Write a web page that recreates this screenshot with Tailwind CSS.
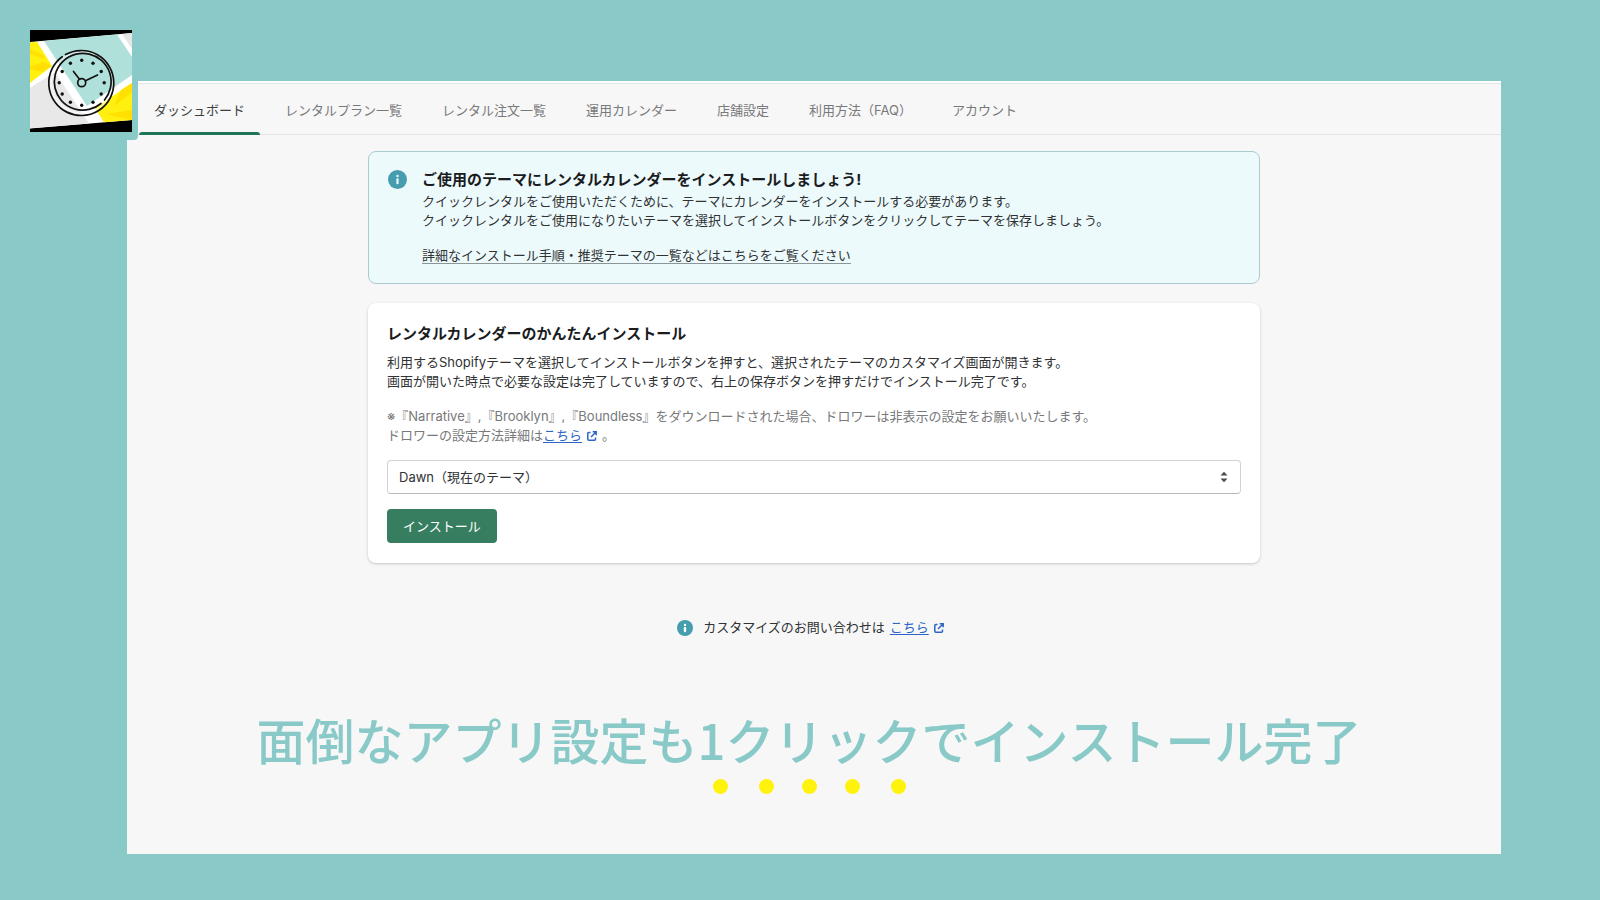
<!DOCTYPE html>
<html lang="ja">
<head>
<meta charset="utf-8">
<meta name="viewport" content="width=device-width, initial-scale=1">
<title>クイックレンタル</title>
<script src="https://cdn.jsdelivr.net/npm/@tailwindcss/browser@4"></script>
</head>
<body class="relative min-h-screen bg-[#89cac8] pt-[81px] pr-[99px] pb-[46px] pl-[127px] font-['Inter','Noto_Sans_CJK_JP',sans-serif] text-[13px] leading-[19px] text-[#303234]">

<!-- App logo badge over the panel corner -->
<div class="absolute top-0 left-0 z-10 rounded-br bg-[#89cac8] pt-[30px] pr-[6px] pb-[8px] pl-[30px]">
  <svg class="block size-[102px]" viewBox="0 0 102 102" role="img" aria-label="クイックレンタル">
    <rect width="102" height="102" fill="#000"/>
    <path d="M0 12 102 3V90L0 98.500Z" fill="#fff"/>
    <path d="M0 12.300 7 11.700 22 36 0 53Z" fill="#fff00f"/>
    <path d="M0 19 15 26 13 29 0 24ZM0 36 14 32 22 36 12 42 0 39Z" fill="#ffe000"/>
    <path d="M14 11 87 4.600 102 27V45L57 76Z" fill="#afe0da"/>
    <path d="M92 4 102 3V19Z" fill="#e6e6e6"/>
    <path d="M0 58 25 42 59 93.500 0 98.300Z" fill="#e8e8e8"/>
    <path d="M102 53V90L74 92.200 65 78Z" fill="#fff00f"/>
    <path d="M102 53V62L84 76 91 60ZM102 80 76 84 102 90Z" fill="#ffe000"/>
    <circle cx="51.700" cy="52.700" r="30.500" fill="none" stroke="#fff" stroke-opacity=".5" stroke-width="2.500"/>
    <g fill="none" stroke="#111" stroke-width="1.700" stroke-linecap="round">
      <path d="M35.500 24.600A32.500 32.500 0 1 1 32.200 26.700"/>
      <path d="M74.500 70A28.400 28.400 0 1 0 71 73.500"/>
      <path d="M43.500 41.500 49.500 49.200M55.500 50.800 67.500 45"/>
      <circle cx="51.700" cy="52.700" r="4"/>
    </g>
    <g fill="#111">
      <circle cx="51.700" cy="30.200" r="1.700"/><circle cx="63" cy="33.200" r="1.700"/><circle cx="71.200" cy="41.500" r="1.700"/>
      <circle cx="74.200" cy="52.700" r="1.700"/><circle cx="71.200" cy="64" r="1.700"/><circle cx="63" cy="72.200" r="1.700"/>
      <circle cx="51.700" cy="75.200" r="1.700"/><circle cx="40.400" cy="72.200" r="1.700"/><circle cx="32.200" cy="64" r="1.700"/>
      <circle cx="29.200" cy="52.700" r="1.700"/><circle cx="32.200" cy="41.500" r="1.700"/><circle cx="40.400" cy="33.200" r="1.700"/>
    </g>
  </svg>
</div>

<div class="min-h-[calc(100vh-127px)] border-t-2 border-white bg-[#f7f7f7]">
  <nav class="flex border-y border-[#e3e4e5] pl-[7px] text-[#77797b]">
    <a href="#" aria-current="page" class="relative px-5 pt-[17px] pb-[14px] text-[#3c3e40]">ダッシュボード<span class="absolute -bottom-px left-[5px] right-[5px] h-[3px] rounded-t bg-[#1f7657]"></span></a>
    <a href="#" class="px-5 pt-[17px] pb-[14px]">レンタルプラン一覧</a>
    <a href="#" class="px-5 pt-[17px] pb-[14px]">レンタル注文一覧</a>
    <a href="#" class="px-5 pt-[17px] pb-[14px]">運用カレンダー</a>
    <a href="#" class="px-5 pt-[17px] pb-[14px]">店舗設定</a>
    <a href="#" class="px-5 pt-[17px] pb-[14px]">利用方法（FAQ）</a>
    <a href="#" class="px-5 pt-[17px] pb-[14px]">アカウント</a>
  </nav>

  <main class="mx-auto max-w-[892px] pt-4">
    <section class="flex gap-[15px] rounded-lg border border-[#a9cbd1] bg-[#edfafc] px-[19px] pt-4 pb-[18px]">
      <svg class="mt-[2px] size-[19px] shrink-0" viewBox="0 0 20 20" aria-hidden="true"><circle cx="10" cy="10" r="10" fill="#459dad"/><circle cx="10" cy="6.200" r="1.300" fill="#ebf9fc"/><rect x="8.800" y="8.700" width="2.400" height="6.300" rx="1" fill="#ebf9fc"/></svg>
      <div>
        <h2 class="text-[15px] leading-6 font-bold text-[#1a1c1e]">ご使用のテーマにレンタルカレンダーをインストールしましょう!</h2>
        <p>クイックレンタルをご使用いただくために、テーマにカレンダーをインストールする必要があります。<br>クイックレンタルをご使用になりたいテーマを選択してインストールボタンをクリックしてテーマを保存しましょう。</p>
        <p class="mt-4"><a href="#" class="border-b border-[#8c9698]">詳細なインストール手順・推奨テーマの一覧などはこちらをご覧ください</a></p>
      </div>
    </section>

    <section class="mt-[19px] rounded-lg bg-white px-[19px] pt-[19px] pb-5 shadow-[0_1px_3px_rgba(0,0,0,0.2)]">
      <h2 class="text-[15px] leading-6 font-bold text-[#1a1c1e]">レンタルカレンダーのかんたんインストール</h2>
      <p class="mt-[7px]">利用するShopifyテーマを選択してインストールボタンを押すと、選択されたテーマのカスタマイズ画面が開きます。<br>画面が開いた時点で必要な設定は完了していますので、右上の保存ボタンを押すだけでインストール完了です。</p>
      <p class="mt-4 text-[#77797b]">※『Narrative』,『Brooklyn』,『Boundless』をダウンロードされた場合、ドロワーは非表示の設定をお願いいたします。<br>ドロワーの設定方法詳細は<a href="#" class="text-[#2c66c4] underline underline-offset-2">こちら</a><svg class="mx-[5px] inline size-[10px] align-[-1px]" viewBox="0 0 10 10" fill="none" stroke="#2c66c4" stroke-width="1.500" aria-hidden="true"><path d="M3.500 1.500H1.800a1 1 0 0 0-1 1V8.200a1 1 0 0 0 1 1H7.500a1 1 0 0 0 1-1V6.500M5.700.8H9.200V4.300M9 1 4 6"/></svg>。</p>
      <div class="relative mt-[15px]">
        <select aria-label="テーマ" class="block h-[34px] w-full appearance-none rounded border border-[#d0d2d4] border-b-[#b8babd] bg-white pr-10 pl-[11px] text-[#303234]">
          <option>Dawn（現在のテーマ）</option>
        </select>
        <svg class="pointer-events-none absolute top-[11px] right-[13px] h-3 w-2" viewBox="0 0 8 12" fill="#4a4c4f" aria-hidden="true"><path d="M.5 4.500 4 .8 7.500 4.500ZM.5 7.500 4 11.200 7.500 7.500Z"/></svg>
      </div>
      <button type="button" class="mt-[15px] h-[34px] rounded bg-[#377e60] px-4 text-white">インストール</button>
    </section>
  </main>

  <p class="mt-[55px] flex items-center justify-center pr-[7px]">
    <svg class="mr-[10px] size-4" viewBox="0 0 20 20" aria-hidden="true"><circle cx="10" cy="10" r="10" fill="#459dad"/><circle cx="10" cy="6.200" r="1.500" fill="#fff"/><rect x="8.500" y="8.900" width="3" height="6.300" rx="1.300" fill="#fff"/></svg>
    カスタマイズのお問い合わせは
    <a href="#" class="ml-[5px] text-[#2c66c4] underline underline-offset-2">こちら</a>
    <svg class="ml-[5px] size-[10px]" viewBox="0 0 10 10" fill="none" stroke="#2c66c4" stroke-width="1.500" aria-hidden="true"><path d="M3.500 1.500H1.800a1 1 0 0 0-1 1V8.200a1 1 0 0 0 1 1H7.500a1 1 0 0 0 1-1V6.500M5.700.8H9.200V4.300M9 1 4 6"/></svg>
  </p>

  <p class="mt-[74px] pr-[10px] text-center font-['Noto_Sans_CJK_JP',sans-serif] text-[49px] leading-[56px] font-medium text-[#89cac8]">面倒なアプリ設定も1クリックでインストール完了</p>
  <div class="mt-3 flex justify-center gap-7 pr-[10px]" aria-hidden="true">
    <span class="mr-[3px] size-[15px] rounded-full bg-[#fff20d]"></span>
    <span class="size-[15px] rounded-full bg-[#fff20d]"></span>
    <span class="size-[15px] rounded-full bg-[#fff20d]"></span>
    <span class="size-[15px] rounded-full bg-[#fff20d]"></span>
    <span class="ml-[3px] size-[15px] rounded-full bg-[#fff20d]"></span>
  </div>
</div>
</body>
</html>
